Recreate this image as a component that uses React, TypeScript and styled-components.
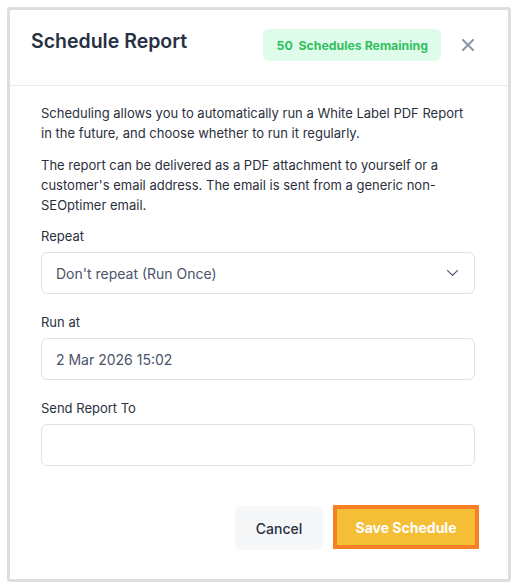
import React from "react";
import styled, { createGlobalStyle } from "styled-components";

const GlobalStyle = createGlobalStyle`
  * { box-sizing: border-box; }
  body {
    margin: 0;
    background: #ffffff;
    font-family: Inter, "Noto Sans", sans-serif;
  }
`;

function App() {
  return (
    <>
      <GlobalStyle />
      <Card>
        <Header>
          <Title>Schedule Report</Title>
          <Badge>50&nbsp; Schedules Remaining</Badge>
          <CloseBtn aria-label="Close">
            <svg width="12" height="12" viewBox="0 0 12 12">
              <path d="M1 1 L11 11 M11 1 L1 11" stroke="#8f95a8" strokeWidth="2" strokeLinecap="round" />
            </svg>
          </CloseBtn>
        </Header>
        <Body>
          <Paragraph>
            Scheduling allows you to automatically run a White Label PDF Report
            in the future, and choose whether to run it regularly.
          </Paragraph>
          <Paragraph>
            The report can be delivered as a PDF attachment to yourself or a
            customer's email address. The email is sent from a generic
            non-SEOptimer email.
          </Paragraph>
          <Fields>
            <Field>
              <Label>Repeat</Label>
              <SelectBox>
                <span>Don't repeat (Run Once)</span>
                <svg width="11" height="6" viewBox="0 0 11 6">
                  <path d="M0.6 0.6 L5.5 5.4 L10.4 0.6" fill="none" stroke="#4b5369" strokeWidth="1.2" strokeLinecap="round" strokeLinejoin="round" />
                </svg>
              </SelectBox>
            </Field>
            <Field>
              <Label>Run at</Label>
              <InputBox>2 Mar 2026 15:02</InputBox>
            </Field>
            <Field>
              <Label>Send Report To</Label>
              <InputBox />
            </Field>
          </Fields>
        </Body>
        <Footer>
          <CancelBtn>Cancel</CancelBtn>
          <SaveBtn>Save Schedule</SaveBtn>
        </Footer>
      </Card>
    </>
  );
}

const Card = styled.div`
  margin: 7px;
  width: 504px;
  height: 575px;
  border: 3px solid #dedede;
  border-radius: 3px;
  background: #ffffff;
  display: flex;
  flex-direction: column;
`;

const Header = styled.div`
  height: 76px;
  padding: 19px 34px 0 21px;
  display: flex;
  align-items: flex-start;
  border-bottom: 1px solid #e9ebef;
`;

const Title = styled.h2`
  margin: 0;
  font-size: 19.5px;
  line-height: 24px;
  font-weight: 600;
  color: #283044;
  flex: 1;
`;

const Badge = styled.div`
  height: 32px;
  padding: 0 13px 0 14px;
  display: flex;
  align-items: center;
  background: #dffbe9;
  border-radius: 6px;
  color: #2fc15f;
  font-size: 12.3px;
  font-weight: 700;
`;

const CloseBtn = styled.button`
  margin-left: 21px;
  margin-top: 10px;
  width: 12px;
  height: 12px;
  padding: 0;
  border: none;
  background: none;
  display: flex;
`;

const Body = styled.div`
  padding: 17px 33px 0 31px;
  display: flex;
  flex-direction: column;
  flex: 1;
`;

const Paragraph = styled.p`
  margin: 0 0 12px;
  font-size: 13px;
  line-height: 20px;
  color: #2b303d;

  & + & {
    margin-bottom: 11px;
  }
`;

const Fields = styled.div`
  display: flex;
  flex-direction: column;
  gap: 18px;
`;

const Field = styled.div`
  display: flex;
  flex-direction: column;
  gap: 6px;
`;

const Label = styled.div`
  font-size: 13px;
  line-height: 20px;
  color: #2b303d;
`;

const InputBox = styled.div`
  height: 42px;
  padding: 0 14px;
  border: 1px solid #dde1e9;
  border-radius: 6px;
  display: flex;
  align-items: center;
  font-size: 14px;
  color: #4b5369;
`;

const SelectBox = styled(InputBox)`
  justify-content: space-between;
  padding-right: 16px;
`;

const Footer = styled.div`
  display: flex;
  justify-content: flex-end;
  align-items: center;
  gap: 10px;
  padding: 0 29px 29px 0;
`;

const CancelBtn = styled.button`
  width: 88px;
  height: 44px;
  border: none;
  border-radius: 7px;
  background: #f6f7f9;
  font-family: Inter, sans-serif;
  font-size: 14px;
  font-weight: 500;
  color: #283044;
`;

const SaveBtn = styled.button`
  width: 146px;
  height: 44px;
  margin-top: -2px;
  border: 4px solid #f87f24;
  background: #f4bf37;
  font-family: Inter, sans-serif;
  font-size: 14px;
  font-weight: 700;
  color: #ffffff;
`;

export default App;
